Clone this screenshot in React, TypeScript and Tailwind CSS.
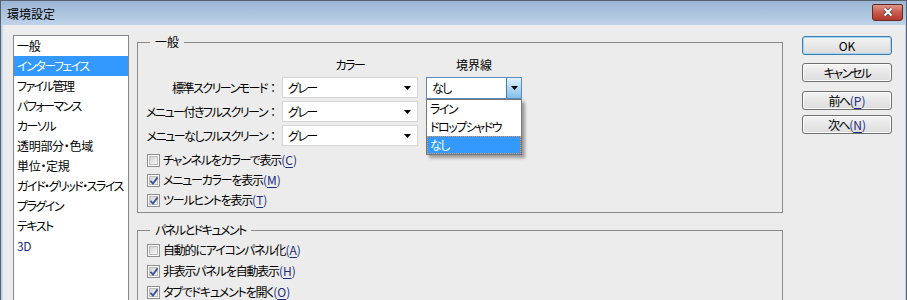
import React from "react";

// [label, kanji-heavy]
const items: [string, boolean][] = [
  ["一般", true],
  ["インターフェイス", false],
  ["ファイル管理", false],
  ["パフォーマンス", false],
  ["カーソル", false],
  ["透明部分・色域", true],
  ["単位・定規", true],
  ["ガイド・グリッド・スライス", false],
  ["プラグイン", false],
  ["テキスト", false],
  ["3D", true],
];

const Arrow = () => (
  <svg width="7" height="4" viewBox="0 0 7 4">
    <path d="M0 0h7L3.5 4z" fill="#000" />
  </svg>
);

const Check = ({ checked }: { checked?: boolean }) => (
  <span className="relative flex h-[13px] w-[13px] shrink-0 items-center justify-center border border-[#8f8f8f] bg-white">
    <span className="h-[9px] w-[9px] border border-[#bdbdbd] bg-linear-to-br from-[#d4d4d4] to-[#f7f7f7]" />
    {checked && (
      <svg className="absolute left-[1px] top-[1px]" width="10" height="10" viewBox="0 0 10 10">
        <path d="M1.5 4.8 L4 7.6 L8.6 1.4" stroke="#3b5697" strokeWidth="1.9" fill="none" />
      </svg>
    )}
  </span>
);

const Acc = ({ c }: { c: string }) => (
  <span className="tracking-normal text-[#1c2c80]">
    (<span className="underline underline-offset-2">{c}</span>)
  </span>
);

const CheckRow = ({ label, acc, checked }: { label: string; acc: string; checked?: boolean }) => (
  <div className="flex h-[20px] items-center gap-[3px] whitespace-nowrap tracking-[-1.2px]">
    <Check checked={checked} />
    <span>
      {label}
      <Acc c={acc} />
    </span>
  </div>
);

const Select = () => (
  <div className="flex h-[21px] w-[136px] items-center justify-between border border-[#d6d6d6] bg-white pl-[5px] pr-[6px]">
    <span>グレー</span>
    <Arrow />
  </div>
);

const Label = ({ text }: { text: string }) => (
  <div className="flex w-[135px] justify-end whitespace-nowrap pr-[3px] leading-[21px]">
    <span>{text}</span>
    <span className="w-[12px] text-center tracking-normal [font-feature-settings:normal]">：</span>
  </div>
);

const Button = ({ children, primary }: { children: React.ReactNode; primary?: boolean }) => (
  <div
    className={
      "flex h-[19px] w-[90px] items-center justify-center rounded-[3px] border bg-linear-to-b from-[#f4f4f4] to-[#dcdcdc] " +
      (primary ? "border-[#3c7fb1] shadow-[inset_0_0_0_1px_#9fd5f5]" : "border-[#707070] shadow-[inset_0_0_0_1px_#fcfcfc]")
    }
  >
    {children}
  </div>
);

export default function App() {
  return (
    <div className="flex h-[300px] w-[907px] flex-col overflow-hidden border-x border-t border-[#56626f] bg-[#ececec] text-[12px] leading-4 tracking-[-1.5px] text-black font-['Noto_Sans_CJK_JP',sans-serif] [font-feature-settings:'palt']">
      {/* title bar */}
      <div className="flex h-[24px] shrink-0 items-center justify-between bg-linear-to-b from-[#9ab5d3] to-[#bed3ea] pl-[6px] pr-[3px]">
        <span className="pt-[1px] tracking-normal">環境設定</span>
        <div className="mb-[2px] flex h-[17px] w-[31px] items-center justify-center rounded-b-[3px] rounded-t-[2px] border border-[#5e2b26] bg-linear-to-b from-[#dd968a] via-[#c8594b] to-[#b6382c]">
          <svg width="12" height="10" viewBox="0 0 12 10">
            <path d="M2.5 1.5 L9.5 8.5 M9.5 1.5 L2.5 8.5" stroke="#4a4a4a" strokeWidth="3.6" />
            <path d="M2.5 1.5 L9.5 8.5 M9.5 1.5 L2.5 8.5" stroke="#fff" strokeWidth="2" />
          </svg>
        </div>
      </div>

      {/* body */}
      <div className="flex flex-1 border-l-2 border-r border-[#c2d6ec] pl-[10px] pt-[9px]">
        {/* category list */}
        <div className="mt-[1px] h-[300px] w-[116px] shrink-0 border border-[#828790] bg-white">
          {items.map(([it, kanji], i) => (
            <div
              key={it}
              className={
                "h-[20px] whitespace-nowrap pl-[3px] leading-[20px] " +
                (kanji ? "tracking-[-0.3px] " : "") +
                (i === 1 ? "bg-[#3399ff] text-white" : i === 10 ? "text-[#1c2c80]" : "")
              }
            >
              {it}
            </div>
          ))}
        </div>

        {/* main */}
        <div className="ml-[8px] w-[646px] shrink-0">
          <fieldset className="border border-[#8a8a8a] px-[9px] pb-[2px]">
            <legend className="ml-[3px] px-[5px] leading-4 tracking-normal">一般</legend>
            <div className="pt-[7px]">
              <div className="flex h-[16px]">
                <div className="w-[135px]" />
                <div className="w-[136px] text-center">カラー</div>
                <div className="ml-[8px] w-[96px] text-center tracking-normal">境界線</div>
              </div>
              <div className="mt-[4px] flex flex-col gap-[3px]">
                <div className="flex h-[21px] items-start">
                  <Label text="標準スクリーンモード" />
                  <Select />
                  <div className="relative z-10 ml-[8px]">
                    <div className="flex h-[22px] w-[96px] border border-[#5a8cc0] bg-white">
                      <span className="flex-1 pl-[5px] leading-[20px]">なし</span>
                      <span className="flex w-[15px] items-center justify-center border-l border-[#3c7fb1] bg-linear-to-b from-[#e3f2fc] to-[#84bfea]">
                        <Arrow />
                      </span>
                    </div>
                    <div className="absolute left-0 top-[22px] w-[96px] border border-[#767676] bg-white shadow-[3px_3px_3px_rgba(0,0,0,0.35)]">
                      <div className="h-[18px] whitespace-nowrap pl-[3px] leading-[18px]">ライン</div>
                      <div className="h-[18px] whitespace-nowrap pl-[3px] leading-[18px]">ドロップシャドウ</div>
                      <div className="h-[18px] border border-dotted border-[#e8964a] bg-[#3399ff] pl-[2px] leading-[16px] text-white">
                        なし
                      </div>
                    </div>
                  </div>
                </div>
                <div className="flex h-[21px] items-start">
                  <Label text="メニュー付きフルスクリーン" />
                  <Select />
                </div>
                <div className="flex h-[21px] items-start">
                  <Label text="メニューなしフルスクリーン" />
                  <Select />
                </div>
              </div>
              <div className="mt-[4px]">
                <CheckRow label="チャンネルをカラーで表示" acc="C" />
                <CheckRow label="メニューカラーを表示" acc="M" checked />
                <CheckRow label="ツールヒントを表示" acc="T" checked />
              </div>
            </div>
          </fieldset>

          <fieldset className="mt-[9px] h-[120px] border border-[#8a8a8a] px-[9px]">
            <legend className="ml-[3px] px-[5px] leading-4">パネルとドキュメント</legend>
            <div className="flex flex-col gap-[1px] pt-[2px]">
              <CheckRow label="自動的にアイコンパネル化" acc="A" />
              <CheckRow label="非表示パネルを自動表示" acc="H" checked />
              <CheckRow label="タブでドキュメントを開く" acc="O" checked />
            </div>
          </fieldset>
        </div>

        {/* buttons */}
        <div className="ml-[19px] mt-[2px] flex w-[90px] shrink-0 flex-col">
          <Button primary>
            <span className="tracking-normal">OK</span>
          </Button>
          <div className="mt-[8px]">
            <Button>キャンセル</Button>
          </div>
          <div className="mt-[9px]">
            <Button>
              前へ<Acc c="P" />
            </Button>
          </div>
          <div className="mt-[5px]">
            <Button>
              次へ<Acc c="N" />
            </Button>
          </div>
        </div>
      </div>
    </div>
  );
}
